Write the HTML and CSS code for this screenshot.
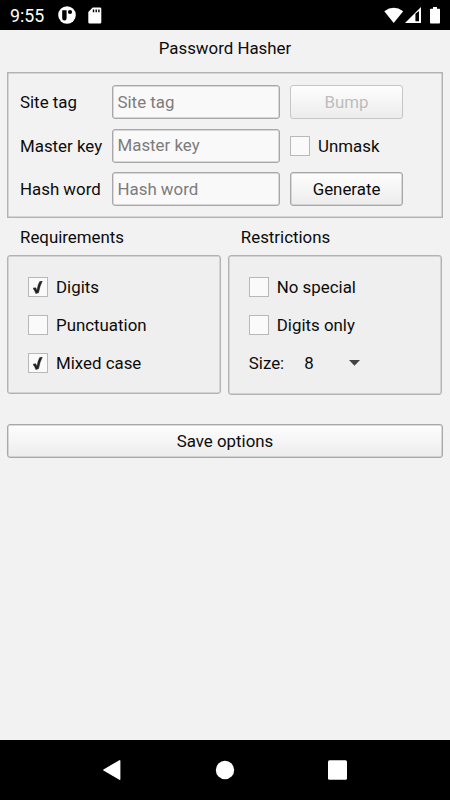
FILE: index.html
```html
<!DOCTYPE html>
<html lang="en">
<head>
<meta charset="utf-8">
<title>Password Hasher</title>
<link rel="stylesheet" href="styles.css">
</head>
<body>
<header class="status">
  <span class="clock">9:55</span>
  <svg class="app-icon" width="18" height="18" viewBox="0 0 18 18"><circle cx="9" cy="9" r="8.8" fill="#fff"/><path d="M4.200 4.200h4.400v8a2.200 2.200 0 0 1-4.400 0z" fill="#000"/><circle cx="12" cy="6" r="2.1" fill="#000"/></svg>
  <svg class="sd-icon" width="14" height="17" viewBox="0 0 14 17"><path d="M4.7.5H12a1.3 1.3 0 0 1 1.3 1.3v13.4a1.3 1.3 0 0 1-1.3 1.3H1.6a1.3 1.3 0 0 1-1.3-1.3V5z" fill="#fff"/><path d="M5.500 2.500v2.800M8.200 2.500v2.800M10.900 2.500v2.800" stroke="#000" stroke-width="1.400"/></svg>
  <div class="system">
    <svg width="20" height="17" viewBox="0 0 20 17"><path d="M.3 4.200Q9.700-2.600 19.200 4.200L9.700 16z" fill="#fff"/></svg>
    <svg width="16" height="17" viewBox="0 0 16 17"><path fill-rule="evenodd" d="M0 16L16 0v16zM10.500 7v7.300h3.500V4z" fill="#fff"/><path d="M10.800 6.500L13.500 4.800v9h-2.700z" fill="#000"/></svg>
    <svg width="10" height="17" viewBox="0 0 10 17"><path d="M3 0h4v1.800h2.200q.8 0 .8.800v13q0 .9-.8.900H.8q-.8 0-.8-.9v-13q0-.8.800-.8H3z" fill="#fff"/></svg>
  </div>
</header>
<main>
  <h1>Password Hasher</h1>
  <form class="fields">
    <label for="tag">Site tag</label><input id="tag" type="text" placeholder="Site tag"><button type="button" disabled>Bump</button>
    <label for="key">Master key</label><input id="key" type="text" placeholder="Master key"><label class="check"><input type="checkbox"><span class="box"></span>Unmask</label>
    <label for="hash">Hash word</label><input id="hash" type="text" placeholder="Hash word"><button type="button">Generate</button>
  </form>
  <div class="groups">
    <section>
      <h2>Requirements</h2>
      <div class="panel">
        <label class="check"><input type="checkbox" checked><span class="box"><svg width="10" height="13" viewBox="0 0 10 13"><path d="M0 7.200L2.600 6.700 4 9.200Q4.900 3.500 6.700.600L9.300 0Q6.700 5 5.500 11.800L2.800 12.500Q1.800 9.400 0 7.200z"/></svg></span>Digits</label>
        <label class="check"><input type="checkbox"><span class="box"></span>Punctuation</label>
        <label class="check"><input type="checkbox" checked><span class="box"><svg width="10" height="13" viewBox="0 0 10 13"><path d="M0 7.200L2.600 6.700 4 9.200Q4.900 3.500 6.700.600L9.300 0Q6.700 5 5.500 11.800L2.800 12.500Q1.800 9.400 0 7.200z"/></svg></span>Mixed case</label>
      </div>
    </section>
    <section>
      <h2>Restrictions</h2>
      <div class="panel tall">
        <label class="check"><input type="checkbox"><span class="box"></span>No special</label>
        <label class="check"><input type="checkbox"><span class="box"></span>Digits only</label>
        <div class="size"><span>Size:</span><span class="value">8</span><svg width="11" height="6" viewBox="0 0 11 6"><path d="M0 0h11L5.500 5.800z" fill="#404244"/></svg></div>
      </div>
    </section>
  </div>
  <button class="save" type="button">Save options</button>
</main>
<nav class="navbar">
  <svg width="20" height="22" viewBox="0 0 20 22"><path d="M16.700 1.800v18.400L.8 11z" fill="#fff" stroke="#fff" stroke-width="1.400" stroke-linejoin="round"/></svg>
  <svg width="20" height="22" viewBox="0 0 20 22"><circle cx="10" cy="11" r="9.200" fill="#fff"/></svg>
  <svg width="20" height="22" viewBox="0 0 20 22"><rect x="0" y="1.200" width="19" height="19.600" rx="1.500" fill="#fff"/></svg>
</nav>
</body>
</html>
```
FILE: styles.css
```css
* { box-sizing: border-box; }
body {
  margin: 0;
  height: 800px;
  display: flex;
  flex-direction: column;
  background: #f2f2f2;
  color: #0c0c0c;
  font: 16.880px/20px Roboto, "Liberation Sans", sans-serif;
}
button, input { font: inherit; color: inherit; }
svg { display: block; flex: none; }
.status {
  height: 30px;
  padding: 0 10px;
  display: flex;
  align-items: center;
  background: #000;
  color: #fff;
}
.clock { width: 48px; font-size: 17.800px; padding-top: 2px; }
.sd-icon { margin-left: 12px; }
.system { margin-left: auto; display: flex; gap: 1px; }
.system svg:last-child { margin-left: 8px; }
main { flex: 1; padding: 8px 7px 0; }
h1, h2 { margin: 0; font: inherit; }
h1 { height: 34px; text-align: center; }
.fields {
  height: 146px;
  margin: 0;
  padding: 12px 0 0 12px;
  border: 1px solid #b3b3b3;
  display: grid;
  grid-template-columns: 83px 168px 113px;
  grid-auto-rows: 34px;
  gap: 9.500px;
  align-items: center;
  box-shadow: inset 0 0 0 .5px #b8b8b8;
}
.fields input[type="text"] {
  width: 100%;
  height: 34px;
  margin-left: -.5px;
  padding: 0 4.500px 1px;
  border: 1px solid #a8a8a8;
  border-radius: 3px;
  background: #f9f9f9;
  box-shadow: inset 0 0 0 .5px #b8b8b8;
}
::placeholder { color: #7c7c7c; opacity: 1; }
button {
  height: 34px;
  padding: 0 0 1px;
  border: 1px solid #a8a8a8;
  border-radius: 3px;
  background: linear-gradient(#fefefe, #ececec);
  box-shadow: inset 0 0 0 .5px #b8b8b8;
}
button:disabled { color: #bdbdbd; border-color: #c6c6c6; box-shadow: none; }
.check { display: flex; align-items: center; }
.check input { position: absolute; opacity: 0; }
.box {
  width: 20px;
  height: 20px;
  margin-right: 8px;
  display: flex;
  align-items: center;
  justify-content: center;
  border: 1px solid #b8b8b8;
  background: #fafafa;
  flex: none;
}
.box path { fill: #202224; stroke: #202224; stroke-width: .5; }
.groups { display: flex; gap: 7px; padding-top: 9px; height: 206px; }
section { width: 213.800px; }
h2 { height: 28px; padding-left: 13px; }
.panel {
  height: 139px;
  padding: 12px 0 0 20px;
  border: 1px solid #b3b3b3;
  border-radius: 3px;
  background: #efefef;
  box-shadow: inset 0 0 0 .5px #b8b8b8;
}
.panel.tall { height: 140px; }
.panel .check, .size { height: 38px; }
.size { display: flex; align-items: center; }
.value { margin: 0 35px 0 20px; }
.save { display: block; width: 100%; }
.navbar {
  height: 60px;
  display: flex;
  justify-content: center;
  align-items: center;
  gap: 92.500px;
  background: #000;
}
```
